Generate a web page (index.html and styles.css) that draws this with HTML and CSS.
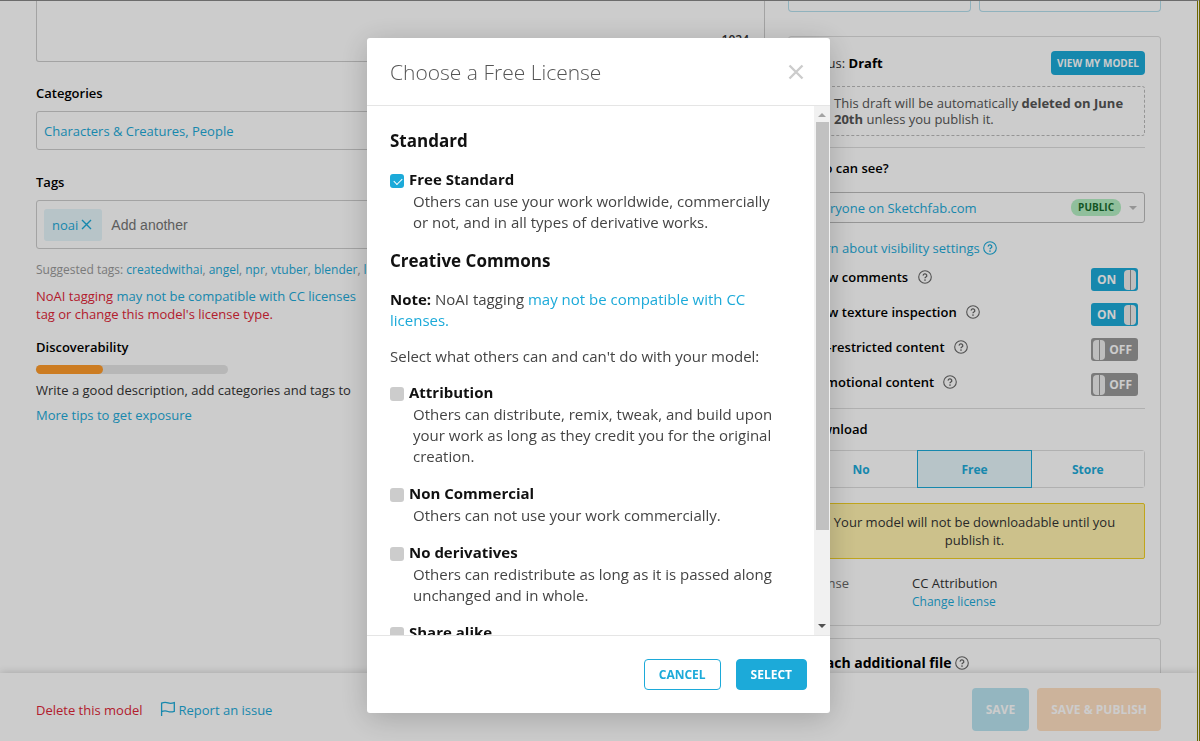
FILE: index.html
```
<!DOCTYPE html>
<html lang="en">
<head>
    <meta charset="utf-8">
    <title>Edit model</title>
    <link rel="stylesheet" href="styles.css">
</head>
<body>
    <svg class="sprite" width="0" height="0" aria-hidden="true">
        <symbol id="icon-help" viewBox="0 0 14 14">
            <circle cx="7" cy="7" r="6.3" fill="none" stroke="currentColor" stroke-width="1.1"/>
            <path d="M5.2 5.6a1.8 1.7 0 1 1 2.7 1.4c-.6.4-.9.6-.9 1.3" fill="none" stroke="currentColor" stroke-width="1.3"/>
            <circle cx="7" cy="10" r=".85" fill="currentColor"/>
        </symbol>
    </svg>

    <div class="page">
        <div class="columns">
            <main class="main">
                <div class="description">
                    <textarea class="description-input" aria-label="Description"></textarea>
                    <span class="counter">1024</span>
                </div>

                <h2 class="label">Categories</h2>
                <button class="field categories">Characters &amp; Creatures, People</button>

                <label class="label" for="tagInput">Tags</label>
                <div class="field tags">
                    <button class="tag">noai
                        <svg width="11" height="11" viewBox="0 0 11 11"><path d="M1 1l9 9M10 1l-9 9" stroke="currentColor" stroke-width="1.4"/></svg>
                    </button>
                    <input class="tag-input" id="tagInput" type="text" placeholder="Add another">
                </div>
                <p class="suggested">Suggested tags: <a href="#">createdwithai</a>, <a href="#">angel</a>, <a href="#">npr</a>, <a href="#">vtuber</a>, <a href="#">blender</a>, <a href="#">lowpoly</a></p>
                <p class="warning">NoAI tagging <a href="#">may not be compatible with CC licenses</a><br>tag or change this model's license type.</p>

                <h2 class="label">Discoverability</h2>
                <div class="meter"><div class="meter-fill" style="width: 35%"></div></div>
                <p class="tip">Write a good description, add categories and tags to</p>
                <p class="tip"><a href="#">More tips to get exposure</a></p>
            </main>

            <aside class="side">
                <div class="top-buttons">
                    <button aria-label="Edit thumbnail"></button>
                    <button aria-label="Edit 3D settings"></button>
                </div>

                <section class="card">
                    <div class="status">
                        <span>Status: <b>Draft</b></span>
                        <button class="btn-view">VIEW MY MODEL</button>
                    </div>
                    <p class="notice">This draft will be automatically <b>deleted on June 20th</b> unless you publish it.</p>

                    <div class="group visibility">
                        <label class="label" for="visibility">Who can see?</label>
                        <div class="select">
                            <select id="visibility">
                                <option>Everyone on Sketchfab.com</option>
                            </select>
                            <span class="badge">PUBLIC</span>
                        </div>
                        <a class="learn" href="#">Learn about visibility settings <svg class="help"><use href="#icon-help"/></svg></a>
                        <label class="setting">
                            <span>Allow comments <svg class="help"><use href="#icon-help"/></svg></span>
                            <input type="checkbox" checked><span class="toggle on">ON</span>
                        </label>
                        <label class="setting">
                            <span>Allow texture inspection <svg class="help"><use href="#icon-help"/></svg></span>
                            <input type="checkbox" checked><span class="toggle on">ON</span>
                        </label>
                        <label class="setting">
                            <span>Age-restricted content <svg class="help"><use href="#icon-help"/></svg></span>
                            <input type="checkbox"><span class="toggle">OFF</span>
                        </label>
                        <label class="setting">
                            <span>Promotional content <svg class="help"><use href="#icon-help"/></svg></span>
                            <input type="checkbox"><span class="toggle">OFF</span>
                        </label>
                    </div>

                    <div class="group">
                        <h2 class="label">Download</h2>
                        <div class="choices">
                            <button>No</button>
                            <button class="active">Free</button>
                            <button>Store</button>
                        </div>
                        <p class="alert">Your model will not be downloadable until you publish it.</p>
                        <div class="license">
                            <span class="license-name">License</span>
                            <div>
                                <div>CC Attribution</div>
                                <a href="#">Change license</a>
                            </div>
                        </div>
                    </div>
                </section>

                <section class="card attach">
                    <h2>Attach additional file <svg class="help"><use href="#icon-help"/></svg></h2>
                </section>
            </aside>
        </div>

        <footer class="bar">
            <a class="delete" href="#">Delete this model</a>
            <a class="report" href="#"><svg width="16" height="16" viewBox="0 0 16 16"><path d="M1.6 15V1.5M1.6 2.2c3-1.4 4.6-1 6.4-.3s3.6.6 6.3-.2v8.6c-2.7.9-4.5.9-6.3.2s-3.4-1.1-6.4.2" fill="none" stroke="currentColor" stroke-width="1.3"/></svg>Report an issue</a>
            <button class="btn-save">SAVE</button>
            <button class="btn-publish">SAVE &amp; PUBLISH</button>
        </footer>
    </div>

    <div class="overlay">
        <div class="modal" role="dialog" aria-labelledby="modalTitle">
            <header class="modal-header">
                <h1 id="modalTitle">Choose a Free License</h1>
                <button class="close" aria-label="Close">
                    <svg width="16" height="16" viewBox="0 0 16 16"><path d="M1.5 1.5l13 13M14.5 1.5l-13 13" stroke="currentColor" stroke-width="2.4"/></svg>
                </button>
            </header>
            <div class="modal-body">
                <div class="modal-scroll">
                    <h3>Standard</h3>
                    <div class="option">
                        <input type="checkbox" id="free" checked>
                        <label for="free">Free Standard</label>
                        <p>Others can use your work worldwide, commercially or not, and in all types of derivative works.</p>
                    </div>
                    <h3>Creative Commons</h3>
                    <p class="note"><b>Note:</b> NoAI tagging <a href="#">may not be compatible with CC licenses.</a></p>
                    <p class="note">Select what others can and can't do with your model:</p>
                    <div class="option">
                        <input type="checkbox" id="by">
                        <label for="by">Attribution</label>
                        <p>Others can distribute, remix, tweak, and build upon your work as long as they credit you for the original creation.</p>
                    </div>
                    <div class="option">
                        <input type="checkbox" id="nc">
                        <label for="nc">Non Commercial</label>
                        <p>Others can not use your work commercially.</p>
                    </div>
                    <div class="option">
                        <input type="checkbox" id="nd">
                        <label for="nd">No derivatives</label>
                        <p>Others can redistribute as long as it is passed along unchanged and in whole.</p>
                    </div>
                    <div class="option">
                        <input type="checkbox" id="sa">
                        <label for="sa">Share alike</label>
                    </div>
                </div>
                <div class="scrollbar" aria-hidden="true">
                    <svg width="16" height="16" viewBox="0 0 16 16"><path d="M4 11h8L8 7z" fill="#a3a3a3"/></svg>
                    <div class="track"><div class="thumb" style="height: 82%"></div></div>
                    <svg width="16" height="16" viewBox="0 0 16 16"><path d="M4 5h8l-4 4z" fill="#505050"/></svg>
                </div>
            </div>
            <footer class="modal-footer">
                <button class="btn btn-cancel">CANCEL</button>
                <button class="btn btn-select">SELECT</button>
            </footer>
        </div>
    </div>
</body>
</html>
```
FILE: styles.css
```
* {
    box-sizing: border-box;
}
body {
    margin: 0;
    font-family: "Open Sans", sans-serif;
    font-size: 13px;
    line-height: 20px;
    color: #333;
    background: #fff;
}
h1, h2, h3, p {
    margin: 0;
}
a {
    color: #1caad9;
    text-decoration: none;
}
button, select, input, textarea {
    font-family: inherit;
    cursor: pointer;
}
.sprite {
    position: absolute;
}

/* page */
.page {
    height: 100vh;
    overflow: hidden;
    display: flex;
    flex-direction: column;
    border-top: 1px solid #888;
    border-right: 3px double #8a8000;
}
.columns {
    flex: 1;
    min-height: 0;
    overflow: hidden;
    display: flex;
    gap: 23px;
    padding: 0 36px;
}
.main {
    flex: 1;
}
.description {
    position: relative;
    margin-bottom: 21px;
}
.description-input {
    display: block;
    width: 100%;
    height: 61px;
    border: 1px solid #ccc;
    border-top: 0;
    border-radius: 0 0 3px 3px;
    background: #fff;
    resize: none;
}
.counter {
    position: absolute;
    right: 16px;
    bottom: 12px;
    font-size: 12px;
    font-weight: 600;
}
.label {
    display: block;
    margin-bottom: 8px;
    font-size: 13px;
    font-weight: 600;
    line-height: 20px;
    color: #000;
}
.field {
    display: flex;
    align-items: center;
    width: 100%;
    margin-bottom: 22px;
    padding: 0 7px;
    border: 1px solid #ccc;
    border-radius: 3px;
    background: #fff;
}
.categories {
    height: 39px;
    font-size: 13px;
    color: #1caad9;
}
.tags {
    height: 49px;
    margin-bottom: 11px;
}
.tag {
    display: flex;
    align-items: center;
    gap: 3px;
    height: 32px;
    padding: 0 10px 0 8px;
    border: 0;
    border-radius: 3px;
    background: #e5f5fa;
    color: #1caad9;
    font-size: 13px;
}
.tag-input {
    flex: 1;
    padding: 0 9px;
    border: 0;
    font-family: "Liberation Sans", Arial, sans-serif;
    font-size: 14px;
}
.tag-input::placeholder {
    color: #757575;
}
.suggested {
    margin-bottom: 7px;
    font-size: 12px;
    color: #999;
}
.warning {
    margin-bottom: 14px;
    line-height: 18px;
    color: #e02638;
}
.meter {
    width: 192px;
    height: 9px;
    margin-bottom: 6px;
    border-radius: 5px;
    background: #e5e5e5;
}
.meter-fill {
    height: 100%;
    border-radius: 5px;
    background: #ff9c2b;
}
.tip {
    margin-bottom: 5px;
}

/* sidebar */
.side {
    width: 373px;
}
.top-buttons {
    display: flex;
    gap: 8px;
    margin-bottom: 24px;
}
.top-buttons button {
    flex: 1;
    height: 11px;
    border: 1px solid #b5dfed;
    border-top: 0;
    border-radius: 0 0 4px 4px;
    background: #fff;
}
.card {
    margin-bottom: 12px;
    padding: 14px 15px 4px;
    border: 1px solid #ddd;
    border-radius: 3px;
}
.status {
    display: flex;
    justify-content: space-between;
    align-items: center;
    margin-bottom: 11px;
}
.status b {
    color: #000;
}
.btn-view {
    height: 24px;
    padding: 0 6px;
    border: 0;
    border-radius: 4px;
    background: #1caad9;
    color: #fff;
    font-size: 10px;
    font-weight: 700;
}
.notice {
    margin-bottom: 11px;
    padding: 8px 8px 8px 29px;
    border: 1px dashed #bbb;
    border-radius: 3px;
    line-height: 16px;
    color: #555;
}
.group {
    padding: 10px 0;
    border-top: 1px solid #ddd;
}
.group > .label {
    margin-bottom: 11px;
}
.visibility {
    padding-bottom: 0;
}
.visibility > .label {
    margin-bottom: 14px;
}
.select {
    position: relative;
    margin-bottom: 15px;
}
.select select {
    display: block;
    width: 100%;
    height: 31px;
    padding: 0 4px;
    appearance: none;
    border: 1px solid #bbb;
    border-radius: 3px;
    background: #fff;
    color: #1caad9;
    font-size: 13px;
}
.select::after {
    content: "";
    position: absolute;
    right: 8px;
    top: 14px;
    border: 4px solid transparent;
    border-top-color: #bbb;
}
.badge {
    position: absolute;
    right: 24px;
    top: 7px;
    padding: 0 7px;
    border-radius: 8px;
    background: #b5efc3;
    color: #17692c;
    font-size: 10px;
    font-weight: 700;
    line-height: 17px;
}
.learn {
    display: block;
    margin-bottom: 10px;
}
.help {
    width: 14px;
    height: 14px;
    vertical-align: -2px;
}
.setting {
    display: flex;
    justify-content: space-between;
    margin-bottom: 12px;
    padding-right: 7px;
    font-weight: 600;
    color: #000;
    line-height: 18px;
    height: 23px;
}
.setting .help {
    margin-left: 6px;
    color: #666;
}
.setting input {
    position: absolute;
    opacity: 0;
}
.toggle {
    display: flex;
    align-items: center;
    justify-content: space-between;
    width: 47px;
    height: 23px;
    padding: 0 6px 0 2px;
    border-radius: 3px;
    background: #999;
    color: #fff;
    font-size: 12px;
    font-weight: 700;
}
.toggle::before {
    content: "";
    width: 12px;
    height: 20px;
    border-radius: 4px;
    background: linear-gradient(90deg, #eee 6px, #999 6px, #999 7px, #eee 7px);
}
.toggle.on {
    flex-direction: row-reverse;
    padding: 0 2px 0 6px;
    background: #1caad9;
}
.choices {
    display: flex;
    margin-bottom: 15px;
    border: 1px solid #ddd;
    border-radius: 3px;
}
.choices button {
    flex: 1;
    height: 36px;
    border: 0;
    background: #fff;
    color: #1caad9;
    font-size: 12px;
    font-weight: 700;
}
.choices .active {
    margin: -1px 0;
    height: 38px;
    border: 1px solid #1caad9;
    background: #e5f5fa;
}
.alert {
    margin-bottom: 15px;
    padding: 9px 15px;
    border: 1px solid #f0cf24;
    border-radius: 2px;
    background: #fff2ae;
    line-height: 18px;
    text-align: center;
}
.license {
    display: flex;
    line-height: 18px;
}
.license-name {
    width: 108px;
    color: #666;
}
.license a {
    font-size: 12px;
}
.attach h2 {
    font-size: 14px;
    font-weight: 700;
    line-height: 20px;
    color: #000;
}
.attach .help {
    color: #666;
}

/* bottom bar */
.bar {
    display: flex;
    align-items: center;
    gap: 8px;
    height: 68px;
    padding: 5px 36px 0;
    background: #fff;
    box-shadow: 0 0 8px rgba(0,0,0,0.2);
    position: relative;
}
.delete {
    margin-right: 10px;
    color: #e02638;
}
.report {
    flex: 1;
}
.report svg {
    margin-right: 2px;
    vertical-align: -2px;
}
.bar button {
    height: 43px;
    padding: 0 14px;
    border: 0;
    border-radius: 4px;
    color: #fff;
    font-size: 12px;
    font-weight: 700;
}
.bar .btn-save {
    background: #b9e4f1;
}
.bar .btn-publish {
    background: #ffe0c2;
}

/* license dialog */
.overlay {
    position: fixed;
    inset: 0;
    display: flex;
    justify-content: center;
    padding: 38px 3px 28px 0;
    background: rgba(0,0,0,0.2);
}
.modal {
    display: flex;
    flex-direction: column;
    width: 463px;
    border-radius: 3px;
    background: #fff;
    box-shadow: 0 5px 30px rgba(0,0,0,0.2);
    font-size: 15px;
    line-height: 21px;
    color: #444;
}
.modal-header {
    display: flex;
    justify-content: space-between;
    align-items: center;
    height: 68px;
    padding: 0 26px 0 23px;
    border-bottom: 1px solid #e5e5e5;
}
.modal-header h1 {
    font-size: 21px;
    font-weight: 300;
    line-height: 28px;
    color: #555;
}
.close {
    padding: 0;
    border: 0;
    background: none;
    color: #ccc;
}
.close svg {
    display: block;
}
.modal-body {
    flex: 1;
    min-height: 0;
    display: flex;
}
.modal-scroll {
    flex: 1;
    overflow-y: auto;
    scrollbar-width: none;
    padding: 23px 23px 0;
}
.modal-scroll h3 {
    margin-bottom: 16px;
    font-size: 17px;
    font-weight: 700;
    line-height: 24px;
    color: #111;
}
.note {
    margin-bottom: 15px;
}
.note b {
    color: #111;
}
.option {
    display: flex;
    flex-wrap: wrap;
    align-items: center;
    column-gap: 5px;
    margin-bottom: 16px;
}
.option input {
    width: 14px;
    height: 14px;
    margin: 3px 0 0;
    appearance: none;
    border-radius: 3px;
    background: #ccc;
}
.option input:checked {
    background: #1caad9;
}
.option input:checked::before {
    content: "";
    display: block;
    width: 7px;
    height: 4px;
    margin: 4px 0 0 4px;
    border: solid #fff;
    border-width: 0 0 1px 1px;
    transform: rotate(-45deg);
}
.option label {
    font-weight: 700;
    color: #111;
}
.option p {
    width: 100%;
    margin-top: 1px;
    padding: 0 8px 0 23px;
}
.scrollbar {
    display: flex;
    flex-direction: column;
    width: 16px;
    background: #f1f1f1;
}
.track {
    flex: 1;
    padding: 0 1px 0 2px;
}
.thumb {
    background: #c1c1c1;
}
.modal-footer {
    display: flex;
    justify-content: flex-end;
    align-items: center;
    gap: 15px;
    height: 78px;
    padding: 0 23px;
    border-top: 1px solid #e5e5e5;
}
.btn {
    height: 31px;
    padding: 0 14px;
    border: 1px solid #1caad9;
    border-radius: 4px;
    font-size: 12px;
    font-weight: 700;
}
.btn-cancel {
    background: #fff;
    color: #1caad9;
}
.btn-select {
    background: #1caad9;
    color: #fff;
}
```
